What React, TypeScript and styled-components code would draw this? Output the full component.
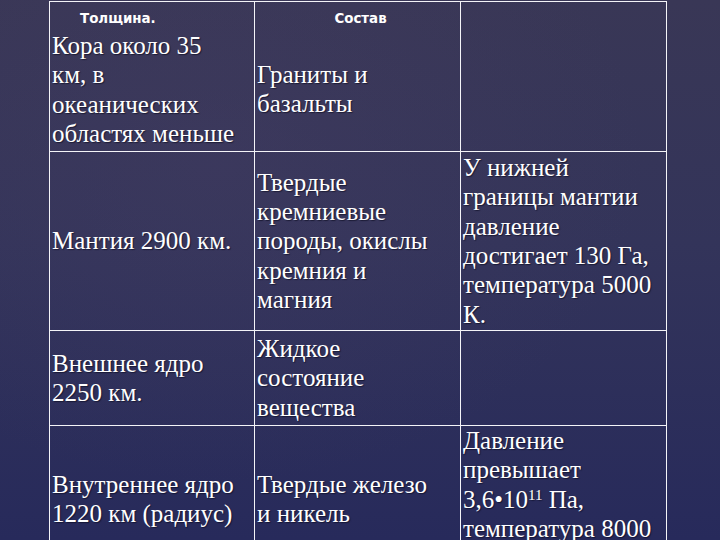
import React from "react";
import styled, { createGlobalStyle } from "styled-components";

const Global = createGlobalStyle`
  html, body { margin: 0; padding: 0; }
  body { width: 720px; height: 540px; overflow: hidden; }
`;

const Slide = styled.div`
  width: 720px;
  height: 540px;
  overflow: hidden;
  background:
    radial-gradient(ellipse at 30% 30%, rgba(70, 62, 100, 0.35), transparent 60%),
    linear-gradient(180deg, #393756 0%, #33345a 45%, #272a5b 100%);
  padding: 1px 0 0 49px;
  box-sizing: border-box;
  font-family: "Liberation Serif", "Times New Roman", serif;
  color: #ffffff;
`;

const Table = styled.table`
  width: 618px;
  border-collapse: collapse;
  table-layout: fixed;
`;

const Row = styled.tr<{ $h?: number }>`
  height: ${(p) => (p.$h ? `${p.$h}px` : "auto")};
`;

const Cell = styled.td<{ $top?: boolean }>`
  border: 1.5px solid #f4f4f8;
  padding: 0 2px 0 2px;
  vertical-align: ${(p) => (p.$top ? "top" : "middle")};
  font-size: 25px;
  line-height: 29.3px;
  white-space: nowrap;
  text-shadow: 1px 1px 1px rgba(10, 10, 30, 0.6);
`;

const Head = styled.div<{ $center?: boolean }>`
  font-family: "DejaVu Sans", Verdana, sans-serif;
  font-weight: bold;
  font-size: 13.4px;
  line-height: 16px;
  padding: 9px 0 4px ${(p) => (p.$center ? "6px" : "28px")};
  text-align: ${(p) => (p.$center ? "center" : "left")};
  text-shadow: none;
`;

const Gap = styled.div`
  height: 29px;
`;

const Sup = styled.sup`
  font-size: 15px;
  line-height: 0;
  vertical-align: 8px;
`;

export default function App() {
  return (
    <>
      <Global />
      <Slide>
        <Table>
          <colgroup>
            <col style={{ width: 205 }} />
            <col style={{ width: 206 }} />
            <col style={{ width: 206 }} />
          </colgroup>
          <tbody>
            <Row $h={150}>
              <Cell $top>
                <Head>Толщина.</Head>
                Кора около 35
                <br />
                км, в
                <br />
                океанических
                <br />
                областях меньше
              </Cell>
              <Cell $top>
                <Head $center>Состав</Head>
                <Gap />
                Граниты и
                <br />
                базальты
              </Cell>
              <Cell />
            </Row>
            <Row $h={179}>
              <Cell>Мантия 2900 км.</Cell>
              <Cell>
                Твердые
                <br />
                кремниевые
                <br />
                породы, окислы
                <br />
                кремния и
                <br />
                магния
              </Cell>
              <Cell>
                У нижней
                <br />
                границы мантии
                <br />
                давление
                <br />
                достигает 130 Га,
                <br />
                температура 5000
                <br />
                К.
              </Cell>
            </Row>
            <Row $h={95}>
              <Cell>
                Внешнее ядро
                <br />
                2250 км.
              </Cell>
              <Cell>
                Жидкое
                <br />
                состояние
                <br />
                вещества
              </Cell>
              <Cell />
            </Row>
            <Row>
              <Cell>
                Внутреннее ядро
                <br />
                1220 км (радиус)
              </Cell>
              <Cell>
                Твердые железо
                <br />и никель
              </Cell>
              <Cell>
                Давление
                <br />
                превышает
                <br />
                3,6•10<Sup>11</Sup> Па,
                <br />
                температура 8000
                <br />
                К.
              </Cell>
            </Row>
          </tbody>
        </Table>
      </Slide>
    </>
  );
}
